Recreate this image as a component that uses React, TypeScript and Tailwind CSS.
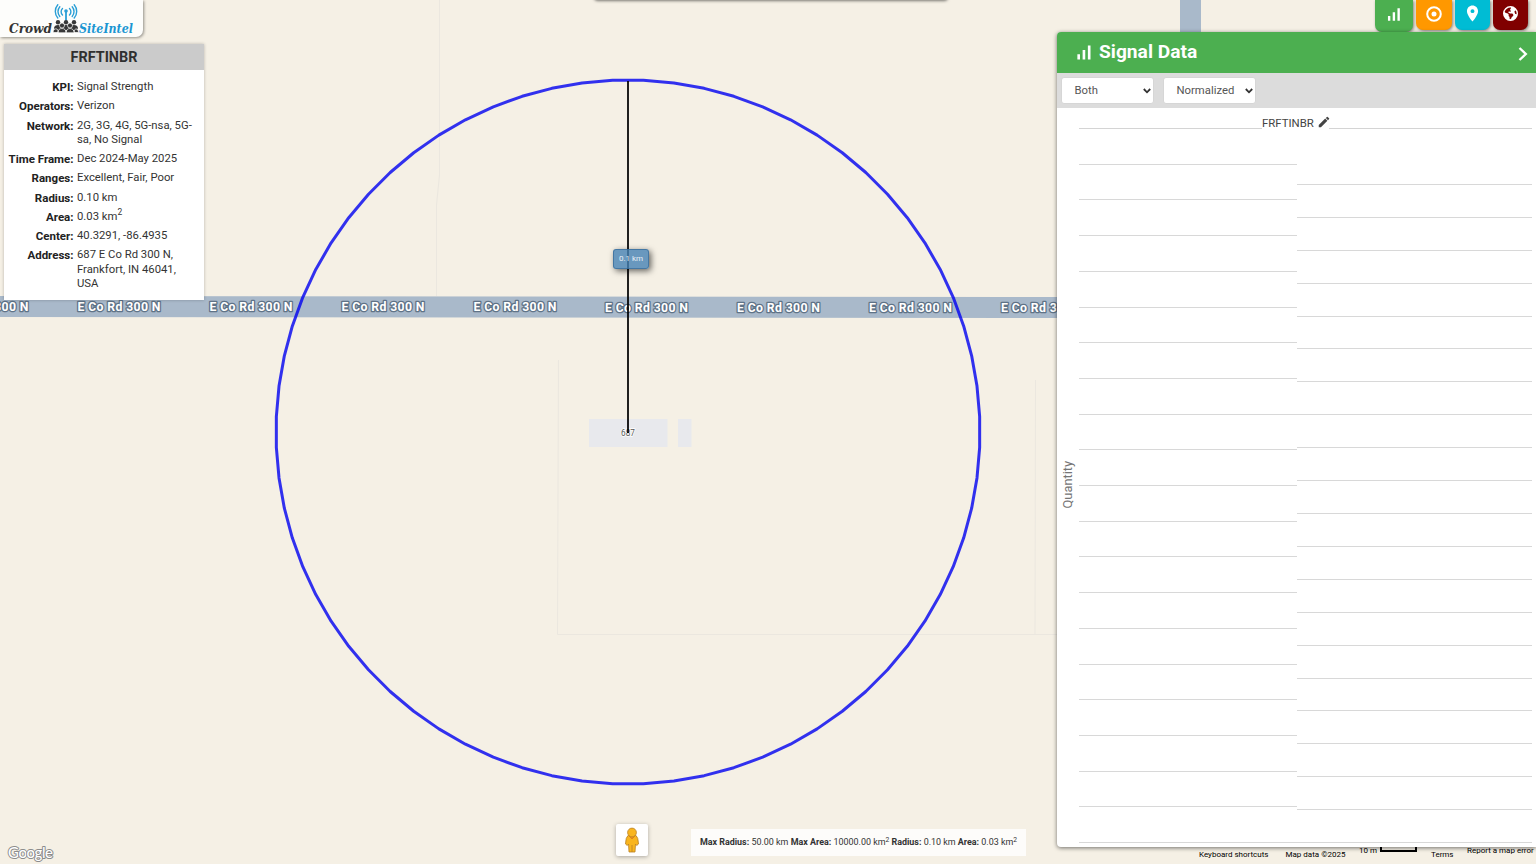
import React from "react";
import { MdSignalCellularAlt, MdPlace, MdEdit } from "react-icons/md";
import { FaEarthAmericas } from "react-icons/fa6";

const details: [string, React.ReactNode][] = [
  ["KPI", "Signal Strength"],
  ["Operators", "Verizon"],
  ["Network", "2G, 3G, 4G, 5G-nsa, 5G-sa, No Signal"],
  ["Time Frame", "Dec 2024-May 2025"],
  ["Ranges", "Excellent, Fair, Poor"],
  ["Radius", "0.10 km"],
  ["Area", <>0.03 km<Sq /></>],
  ["Center", "40.3291, -86.4935"],
  ["Address", "687 E Co Rd 300 N, Frankfort, IN 46041, USA"],
];

function Sq() {
  return <sup className="top-[-0.5em] text-[75%]">2</sup>;
}

const roadLabels = [-13, 119, 251, 383, 515, 646.5, 778.5, 910.5, 1042.5];

// The map draws its radius circle as a 72-sided polygon.
const ring = Array.from({ length: 72 }, (_, i) => {
  const a = ((2.5 + i * 5) * Math.PI) / 180;
  return `${(628 - 352 * Math.sin(a)).toFixed(2)},${(432 + 352 * Math.cos(a)).toFixed(2)}`;
}).join(" ");

function MapCanvas() {
  return (
    <svg className="absolute inset-0" width="1536" height="864" viewBox="0 0 1536 864" fontFamily="Roboto, sans-serif">
      <g stroke="#ebe7df" strokeWidth="1" fill="none">
        <path d="M439.500 0V175L436.500 205V296" />
        <path d="M558.500 360L557.500 634.500H1035L1035.500 380" />
        <path d="M1035 634.500H1060" />
      </g>
      <path d="M0 296L1060 297V318L0 317Z" fill="#a9b9ca" />
      <rect x="1180" y="0" width="21" height="34" fill="#a9b9ca" />
      <rect x="589" y="419" width="78.500" height="28" fill="#e8e9ed" />
      <rect x="678" y="419" width="13.500" height="28" fill="#e8e9ed" />
      <g fontSize="12.300" fontWeight="700" textAnchor="middle" fill="#fff" stroke="#5f7387" strokeWidth="2.600" strokeLinejoin="round" paintOrder="stroke">
        {roadLabels.map((x, i) => (
          <text key={x} x={x} y={311 + i * 0.12} textLength="83" lengthAdjust="spacing">E Co Rd 300 N</text>
        ))}
      </g>
      <text x="628" y="436.400" fontSize="8.200" textAnchor="middle" fill="#555" stroke="#fff" strokeWidth="1.500" paintOrder="stroke">687</text>
      <polygon points={ring} fill="none" stroke="#0000f0" strokeOpacity="0.800" strokeWidth="3" strokeLinejoin="round" />
      <path d="M628 81V433" stroke="#000" strokeOpacity="0.870" strokeWidth="2" />
      <text x="8" y="858" fontSize="15" fontWeight="500" fontFamily="Lato, sans-serif" fill="#fff" stroke="#8c8c8c" strokeWidth="2" strokeLinejoin="round" paintOrder="stroke" textLength="45">Google</text>
    </svg>
  );
}

function Logo() {
  return (
    <div className="absolute left-0 top-0 h-[37px] w-[143px] rounded-br-[7px] bg-[#fdfdfb] shadow-[1px_1px_3px_rgba(0,0,0,0.4)]">
      <svg width="143" height="37" viewBox="0 0 143 37" fontFamily="'DejaVu Serif', serif" fontWeight="700" fontStyle="italic" fontSize="13.500">
        <text x="9" y="33" fill="#343434" textLength="43" lengthAdjust="spacingAndGlyphs">Crowd</text>
        <text x="79" y="33" fill="#1b96d2" textLength="54" lengthAdjust="spacingAndGlyphs">SiteIntel</text>
        <g fill="none" stroke="#2a9fd6" strokeWidth="1.400" strokeLinecap="round">
          <path d="M62.500 8.500A4.500 4.500 0 0 0 62.500 15M69.500 8.500A4.500 4.500 0 0 1 69.500 15M59.800 6.700A7.500 7.500 0 0 0 59.800 16.500M72.200 6.700A7.500 7.500 0 0 1 72.200 16.500M57.800 4.800A10 10 0 0 0 57.800 18M74.200 4.800A10 10 0 0 1 74.200 18" />
          <path d="M66 11V20" strokeWidth="1.800" />
        </g>
        <circle cx="66" cy="11" r="1.800" fill="#2a9fd6" />
        <g fill="#383838">
          <circle cx="58" cy="22.200" r="2.200" />
          <circle cx="66" cy="22.200" r="2.200" />
          <circle cx="74" cy="22.200" r="2.200" />
          <path d="M54 28Q54.500 25 58 25T62 28Q62.500 25 66 25T70 28Q70.500 25 74 25T78 28L77 30H55Z" />
          <g stroke="#fdfdfb" strokeWidth="0.700">
            <circle cx="62" cy="25.500" r="2.500" />
            <circle cx="70" cy="25.500" r="2.500" />
            <path d="M53 32.500Q53.500 28 57 29Q59 31 58.500 32.500ZM57.500 32.800Q58 28.500 62 28.500T66 32.800ZM66 32.800Q66.500 28.500 70 28.500T74.500 32.800ZM74 32.500Q74 28.500 77 29Q79 31 78.500 32.500Z" />
          </g>
        </g>
      </svg>
    </div>
  );
}

function DetailsCard() {
  return (
    <section className="absolute left-1 top-11 h-64 w-[200px] bg-white text-[11.300px] leading-[14.400px] text-[#333] shadow-[0_0_3px_rgba(0,0,0,0.25)]">
      <h1 className="flex h-[25.500px] items-center justify-center bg-[#cbcbcb] pt-[2px] text-[14.400px] font-bold text-[#303030]">
        <span>FRFTINBR</span>
      </h1>
      <dl className="flex flex-col gap-[4.800px] pt-[10.600px]">
        {details.map(([name, value]) => (
          <div key={name} className="flex gap-[3.500px]">
            <dt className="w-[69.500px] shrink-0 whitespace-nowrap text-right text-[11.500px] font-bold text-[#222]">{name}:</dt>
            <dd className="w-[119px]">{value}</dd>
          </div>
        ))}
      </dl>
    </section>
  );
}

function Tabs() {
  const base = "flex items-center justify-center rounded-b-[7px] text-white shadow-[1px_1px_3px_rgba(0,0,0,0.45)]";
  return (
    <nav className="absolute right-2 top-0 flex items-start gap-[3px]">
      <div className={`${base} h-[31.500px] w-[38.500px] bg-[#4caf50] pb-[3px]`}><MdSignalCellularAlt size={19} /></div>
      <div className={`${base} h-[30px] w-[35.500px] bg-[#ff9800] pb-[3px]`}>
        <svg width="16" height="16" viewBox="0 0 16 16">
          <circle cx="8" cy="8" r="6.800" fill="none" stroke="currentColor" strokeWidth="2" />
          <circle cx="8" cy="8" r="2.500" fill="currentColor" />
        </svg>
      </div>
      <div className={`${base} h-[30px] w-[35.500px] bg-[#00bcd4] pb-[3px]`}><MdPlace size={19} /></div>
      <div className={`${base} h-[30px] w-[35px] bg-[#800000] pb-[3px]`}><FaEarthAmericas size={15} /></div>
    </nav>
  );
}

function Select({ value }: { value: string }) {
  return (
    <div className="flex h-[27px] w-[93px] items-center justify-between rounded-[3px] border border-[#d6d6d6] bg-white pl-[12.500px] pr-[2px] text-[11.300px] text-[#555]">
      <span className="pt-[2px]">{value}</span>
      <svg className="mt-px" width="8" height="6" viewBox="0 0 8 6" fill="none" stroke="#333" strokeWidth="1.800"><path d="M0.800 1L4 4.300L7.200 1" /></svg>
    </div>
  );
}

function SignalPanel() {
  const rows = Array.from({ length: 20 }, (_, i) => i);
  return (
    <section className="absolute left-[1057px] top-[32px] flex h-[815px] w-[479px] flex-col rounded-l-[4px] bg-white shadow-[0_1px_4px_rgba(0,0,0,0.55)]">
      <header className="flex h-[40.500px] shrink-0 items-center justify-between rounded-tl-[4px] bg-[#4caf50] pl-[16px] pr-[8px] text-white">
        <h2 className="flex items-center gap-[5px] text-[19.200px] font-bold">
          <MdSignalCellularAlt size={21} />
          <span>Signal Data</span>
        </h2>
        <svg className="mt-[4px]" width="10" height="14" viewBox="0 0 10 14" fill="none" stroke="#fff" strokeWidth="2.400"><path d="M1.500 1L7.800 7L1.500 13" /></svg>
      </header>
      <div className="flex h-[35.500px] shrink-0 items-center gap-[9px] bg-[#dcdcdc] pl-1">
        <Select value="Both" />
        <Select value="Normalized" />
      </div>
      <div className="flex min-h-0 flex-1">
        <div className="flex w-[22px] items-center justify-center pt-[15px]">
          <span className="rotate-180 text-[12.800px] text-[#757575] [writing-mode:vertical-rl]">Quantity</span>
        </div>
        <div className="flex w-[453px] flex-col">
          <div className="flex h-[21px] shrink-0 items-end">
            <div className="w-[183px] border-b border-[#d4d4d4]" />
            <div className="flex h-[15px] w-[67px] items-center gap-[3px] pt-[2px] text-[11.400px] leading-[14px] text-[#444]">
              <span className="whitespace-nowrap">FRFTINBR</span>
              <MdEdit size={14} className="-mt-px shrink-0" />
            </div>
            <div className="flex-1 border-b border-[#d4d4d4]" />
          </div>
          <div className="flex">
            <div className="w-[218px]">
              {rows.map((i) => <div key={i} className="h-[35.710px] border-b border-[#d8d8d8]" />)}
            </div>
            <div className="w-[235px] pt-[23px]">
              <div className="h-[32.920px] border-b border-[#d8d8d8]" />
              {rows.map((i) => <div key={i} className="h-[32.920px] border-b border-[#d8d8d8]" />)}
            </div>
          </div>
        </div>
      </div>
    </section>
  );
}

function Pegman() {
  return (
    <div className="absolute left-[616px] top-[824px] flex h-8 w-8 items-center justify-center rounded-[2px] bg-white pr-px shadow-[0_1px_4px_rgba(0,0,0,0.3)]">
      <svg width="14" height="26" viewBox="0 0 14 26" stroke="#b98025" strokeWidth="0.800" fill="#f9b51e">
        <path d="M3 8.500Q0.800 10 0.500 17L2.300 18.500L3.500 17L4 25H10L10.500 17L11.700 18.500L13.500 17Q13.200 10 11 8.500Z" />
        <path d="M7 18V25" />
        <path d="M4 9L7 12L10 9" fill="#e9921d" stroke="#dd7c18" />
        <circle cx="7" cy="5.500" r="4.400" />
      </svg>
    </div>
  );
}

export default function App() {
  return (
    <main className="relative h-[864px] w-[1536px] overflow-hidden bg-[#f5f0e5] font-[Roboto,sans-serif]">
      <MapCanvas />
      <div className="absolute left-[594px] top-[-4px] h-1 w-[354px] rounded-b-[4px] bg-white shadow-[0_1px_3px_rgba(0,0,0,0.5)]" />
      <div className="absolute left-[613px] top-[249px] flex h-5 w-[36px] items-center justify-center rounded-[3px] border border-[#2c6393]/60 bg-[#4682b4]/80 text-[8px] text-white/85 shadow-[2px_2px_6px_rgba(0,0,0,0.6)]">0.1 km</div>
      <Logo />
      <DetailsCard />
      <Tabs />
      <footer className="absolute left-[1199px] top-[846px] flex h-[18px] w-[337px] text-[8px] leading-[10px] text-black">
        <span className="w-[86.500px] pt-[3.500px]">Keyboard shortcuts</span>
        <span className="w-[73.500px] pt-[3.500px]">Map data ©2025</span>
        <span className="flex w-[72px] gap-[3px]">10 m<span className="h-[6px] w-[37px] border-2 border-t-0 border-black" /></span>
        <span className="w-[36px] pt-[3.500px]">Terms</span>
        <span className="whitespace-nowrap">Report a map error</span>
      </footer>
      <SignalPanel />
      <Pegman />
      <div className="absolute left-[691px] top-[829px] flex h-[27px] w-[335px] items-center justify-center bg-[#fdfcfa] pt-px text-[8.930px] text-[#333]">
        <p className="whitespace-nowrap">
          <b>Max Radius:</b> 50.00 km <b>Max Area:</b> 10000.00 km<Sq /> <b>Radius:</b> 0.10 km <b>Area:</b> 0.03 km<Sq />
        </p>
      </div>
    </main>
  );
}
